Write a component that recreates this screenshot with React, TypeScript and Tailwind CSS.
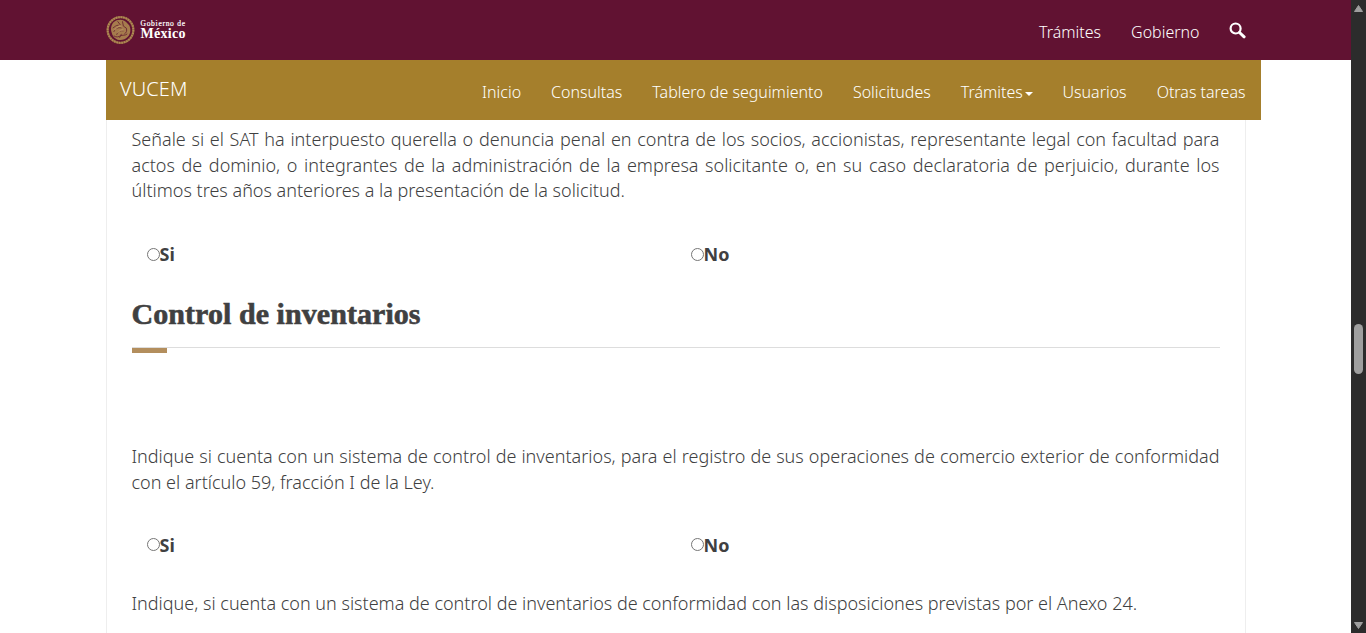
import React from "react";

const menu = ["Inicio", "Consultas", "Tablero de seguimiento", "Solicitudes", "Trámites", "Usuarios", "Otras tareas"];

function Seal() {
  return (
    <svg className="block h-[30px] w-[29px] shrink-0" viewBox="0 0 30 30" fill="none">
      <circle cx="15" cy="15" r="13.3" stroke="#8f6040" strokeWidth="2.3" />
      <circle cx="15" cy="15" r="13.3" stroke="#b08a55" strokeWidth="2" strokeDasharray="1.7 .9" />
      <path d="M6 18C4 13 6 7 11 5c4-1.500 8-.5 10 2l3 3c2 4 1.500 9-1.500 12-3.500 4-9.500 4.500-13 1.500C7.500 22 6.500 20 6 18Z" fill="#a67c4d" />
      <path d="M7 13c2-1 3-3 6-3M8 17c2-4 5-5 8-4M11 20c1-3 4-5 7-4M12 6l3 4M17 6l1 5 3 2M21 13c1 3 0 5-2 6M8 21c3 2 5 1 7 0s5 0 7-2M14 23l2-4" stroke="#6f2c35" strokeWidth="1" />
      <path d="M9 15c3-4 5-4 7-4M12 18c2-3 4-3 6-3" stroke="#c4a06b" strokeWidth="1" />
    </svg>
  );
}

function Options() {
  return (
    <div className="grid h-[26px] grid-cols-2 text-[18px] leading-[26px] font-bold">
      {["Si", "No"].map((label) => (
        <label key={label} className="flex items-center pl-[15px]">
          <input type="radio" className="m-0 size-[13px] shrink-0 appearance-none rounded-full border border-[#767676] bg-white" />
          <span>{label}</span>
        </label>
      ))}
    </div>
  );
}

function Paragraph({ lines }: { lines: string[] }) {
  return (
    <p className="text-[18px] leading-[25.7px] font-light">
      {lines.map((line, i) => (
        <span
          key={line}
          className={i < lines.length - 1 ? "block whitespace-nowrap [text-align-last:justify]" : "block whitespace-nowrap"}
        >
          {line}
        </span>
      ))}
    </p>
  );
}

export default function App() {
  return (
    <div className="flex h-[633px] w-[1366px] overflow-hidden bg-white font-['Noto_Sans','Open_Sans',sans-serif] text-[#404041]">
      <div className="flex min-w-0 flex-1 flex-col">
        <header className="h-[60px] shrink-0 bg-[#611232] pl-[105.5px] text-white">
          <div className="flex h-[60px] w-[1140px] items-center justify-between">
            <div className="flex items-center gap-[6px] pb-px">
              <Seal />
              <div className="flex flex-col pt-px font-['Liberation_Serif',serif] font-bold">
                <span className="text-[7.5px] leading-[8px] font-normal tracking-[0.72px] [-webkit-text-stroke:0.2px_white]">Gobierno de</span>
                <span className="text-[14px] leading-[12px] tracking-[0.3px]">México</span>
              </div>
            </div>
            <nav className="flex items-center gap-[30px] pt-1 text-[16px] font-light">
              <span>Trámites</span>
              <span>Gobierno</span>
              <svg className="-mt-[3px] -ml-px block size-[17px]" viewBox="0 0 17 17" fill="none" stroke="#fff">
                <circle cx="6.6" cy="6.500" r="5" strokeWidth="2.2" />
                <path d="M10.500 10.500l4.600 4.300" strokeWidth="3" strokeLinecap="round" />
              </svg>
            </nav>
          </div>
        </header>
        <div className="ml-[105.5px] flex h-[60px] w-[1155px] shrink-0 justify-between bg-[#a57f2c] pr-[15px] pl-[14.500px] text-white">
          <span className="pt-[15px] text-[20px] leading-7 font-light tracking-[0.1px]">VUCEM</span>
          <nav className="flex h-11 gap-[30px] pt-5 text-[16px] leading-6 font-light">
            {menu.map((item) => (
              <span key={item} className="flex items-center whitespace-nowrap">
                {item}
                {item === "Trámites" && (
                  <i className="mt-[4px] ml-[2px] -mr-[0.4px] border-x-4 border-t-4 border-x-transparent border-t-white" />
                )}
              </span>
            ))}
          </nav>
        </div>
        <main className="ml-[105.5px] flex w-[1140px] flex-1 flex-col border-x border-[#eee] px-[25px] pt-[7px]">
          <Paragraph
            lines={[
              "Señale si el SAT ha interpuesto querella o denuncia penal en contra de los socios, accionistas, representante legal con facultad para",
              "actos de dominio, o integrantes de la administración de la empresa solicitante o, en su caso declaratoria de perjuicio, durante los",
              "últimos tres años anteriores a la presentación de la solicitud.",
            ]}
          />
          <div className="mt-[37px]">
            <Options />
          </div>
          <h2 className="mt-[30px] h-[51px] border-b border-[#ddd] font-['Liberation_Serif',serif] text-[30px] leading-[34px] font-bold tracking-[0.06px] whitespace-nowrap [-webkit-text-stroke:0.6px_#404041]">
            Control de inventarios
          </h2>
          <div className="h-[5px] w-[35px] bg-[#b38e5d]" />
          <div className="mt-[91px]">
            <Paragraph
              lines={[
                "Indique si cuenta con un sistema de control de inventarios, para el registro de sus operaciones de comercio exterior de conformidad",
                "con el artículo 59, fracción I de la Ley.",
              ]}
            />
          </div>
          <div className="mt-[36.4px]">
            <Options />
          </div>
          <div className="mt-[32.6px]">
            <Paragraph lines={["Indique, si cuenta con un sistema de control de inventarios de conformidad con las disposiciones previstas por el Anexo 24."]} />
          </div>
        </main>
      </div>
      <aside className="flex w-[15px] shrink-0 flex-col items-center bg-[#2c2c2c]">
        <svg className="mt-1 block h-[9px] w-[11px]" viewBox="0 0 11 9">
          <path d="M5.500 1.500L9.500 7.500H1.500Z" fill="#9f9f9f" stroke="#9f9f9f" strokeLinejoin="round" />
        </svg>
        <div className="mt-[311px] h-[50px] w-[9px] rounded-full bg-[#9f9f9f]" />
        <svg className="mt-[247px] block h-[9px] w-[11px]" viewBox="0 0 11 9">
          <path d="M5.500 7.500L9.500 1.500H1.500Z" fill="#9f9f9f" stroke="#9f9f9f" strokeLinejoin="round" />
        </svg>
      </aside>
    </div>
  );
}
